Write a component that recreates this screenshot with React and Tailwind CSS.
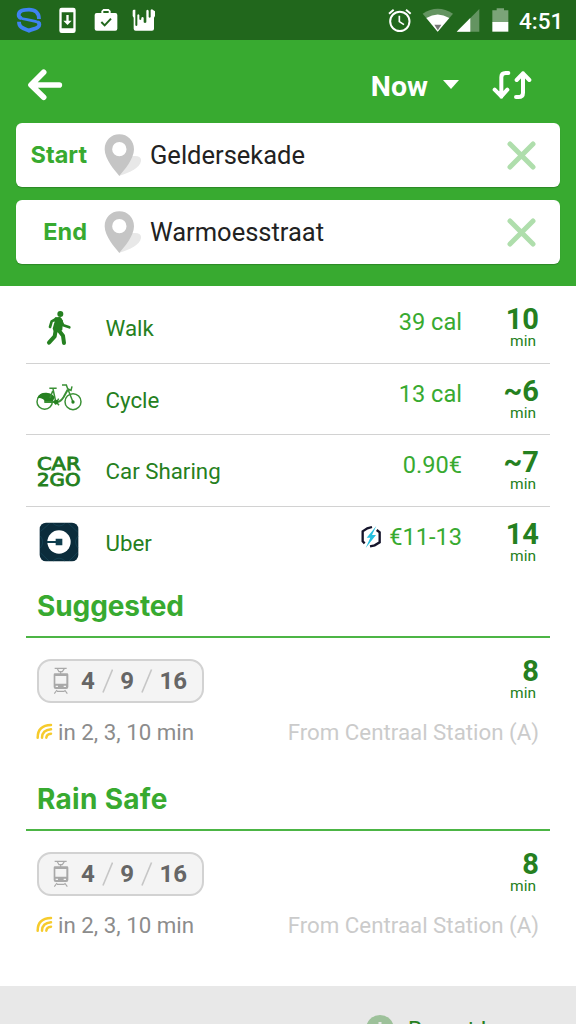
import React from "react";

const statusIcon = "block shrink-0";

function ShieldLogo() {
  return (
    <svg className={statusIcon} width="26" height="28" viewBox="48 18 78 84" fill="none" stroke="#3f83f1" strokeWidth="11.500">
      <path d="M117 57C117 38 105 29 87 29C68 29 56 35 56 45C56 50 59 53 64 55" />
      <path d="M58 52Q66 57 82 59L106 64Q114 66 120 71" strokeWidth="8" />
      <path d="M113 67Q118 69 118 74C118 84 104 85 87 92C70 85 57 83 57 65" />
    </svg>
  );
}

function PhoneDownload() {
  return (
    <svg className={statusIcon} width="17" height="28" viewBox="176 18 51 84">
      <path fill="#fff" fillRule="evenodd" d="M184 23h35q7 0 7 7v62q0 7-7 7h-35q-7 0-7-7V30q0-7 7-7zM184 37v48h35V37z" />
      <path d="M198 45h7v17h9l-12.500 13-12.500-13h9z" fill="#fff" />
    </svg>
  );
}

function CaseCheck() {
  return (
    <svg className={statusIcon} width="24" height="28" viewBox="281 18 72 84">
      <path fill="#fff" fillRule="evenodd" d="M289 39h14v-6l6-6h16l6 6v6h14q6 0 6 6v41q0 6-6 6h-56q-6 0-6-6V45q0-6 6-6zM309 39h16v-6h-16z" />
      <path d="M303 66l10 10 19-20" fill="none" stroke="#21671c" strokeWidth="6" />
    </svg>
  );
}

function Drips() {
  return (
    <svg className={statusIcon} width="24" height="28" viewBox="397 18 72 84">
      <path fill="#fff" d="M399 33q0-4 4-4h4V76q3 4 6 0V45q3-5 6 0v13q3 4 6 0v-5q4-4 7 0v14q4 4 8 0V32q3-5 7 0v19q3 4 6 0V30q4-4 7 0l6 4v14l-3 5v33q0 6-6 6h-49q-6 0-6-6V53l-3-5z" />
    </svg>
  );
}

function StatusBar() {
  return (
    <div className="flex h-10 items-center bg-[#21671c] pl-4 text-white">
      <ShieldLogo />
      <div className="ml-[17px]"><PhoneDownload /></div>
      <div className="ml-[18px]"><CaseCheck /></div>
      <div className="ml-[14px]"><Drips /></div>
      <div className="ml-auto flex items-center pr-[14px]">
        <svg className={statusIcon} width="24" height="28" viewBox="86 18 72 84" fill="none" stroke="#fff">
          <circle cx="121.500" cy="64" r="29" strokeWidth="6" />
          <path d="M120 47v18l14 9" strokeWidth="5" />
          <path d="M89 41l14-12M154 41l-14-12" strokeWidth="6" />
        </svg>
        <svg className="ml-2.5 block shrink-0" width="32" height="28" viewBox="186 18 96 84">
          <path d="M188 41Q233 11 279 41L233 95z" fill="#649461" />
          <path d="M199 54Q233 33 268 54L233 95z" fill="#fff" />
          <path d="M223 74h21l-10.500 17z" fill="#777" />
        </svg>
        <svg className="ml-0.5 block shrink-0" width="24" height="28" viewBox="287 18 72 84">
          <path d="M289 95L357 27v68z" fill="#649461" />
          <path d="M289 95L330 54v41z" fill="#fff" />
        </svg>
        <svg className="ml-3 block shrink-0" width="17" height="28" viewBox="395 18 51 84">
          <path d="M396 31h13v-6h22v6h13v36h-48z" fill="#7ba478" />
          <path d="M396 66h48v29h-48z" fill="#fff" />
        </svg>
        <span className="ml-2.5 w-[43px] pt-0.5 text-[22.500px] font-medium leading-7">4:51</span>
      </div>
    </div>
  );
}

function Pin() {
  return (
    <svg className="block shrink-0" width="38" height="44" viewBox="312 54 114 132">
      <path d="M358 182L392 124Q425 119 423 138C420 158 390 173 358 182z" fill="#e8e8e8" />
      <path fill="#c5c5c5" fillRule="evenodd" d="M358 58C333 58 314 77 314 103C314 133 344 166 358 183C372 166 402 133 402 103C402 77 383 58 358 58zM358 81a21.500 21.500 0 1 1 0 43a21.500 21.500 0 1 1 0-43z" />
    </svg>
  );
}

function Field({ label, value }) {
  return (
    <div className="flex h-16 items-center rounded-md bg-white pr-6 shadow-[0_1px_1px_rgba(0,0,0,0.2)]">
      <div className="w-[71px] text-right font-['Inter'] text-[23.500px] font-bold text-[#38aa30]">{label}</div>
      <div className="ml-[17px]"><Pin /></div>
      <div className="ml-[8px] flex-1 text-[25.500px] text-[#222]">{value}</div>
      <svg width="29" height="29" viewBox="0 0 29 29" stroke="#afdeac" strokeWidth="5" strokeLinecap="round">
        <path d="M3 3l23 23M26 3L3 26" />
      </svg>
    </div>
  );
}

function Header() {
  return (
    <header className="h-[246px] bg-[#38aa30] px-4 text-white">
      <div className="flex h-[83px] items-center pt-[7px]">
        <svg className="ml-[11px]" width="37" height="34" viewBox="81 204 111 102" fill="none" stroke="#fff" strokeWidth="17" strokeLinecap="round" strokeLinejoin="round">
          <path d="M131 217L93 255L131 292M96 255H178" />
        </svg>
        <span className="ml-auto pt-1 text-[28.500px] font-bold leading-8">Now</span>
        <svg className="ml-[15px] mt-[-1px]" width="16" height="9" viewBox="0 0 16 9"><path d="M0 0h16l-8 9z" fill="#fff" /></svg>
        <svg className="ml-[33px] mr-[26px]" width="42" height="30" viewBox="396 210 126 90" fill="none" stroke="#fff" strokeWidth="12" strokeLinecap="round" strokeLinejoin="round">
          <path d="M445 219H437Q424 219 424 232V290M404 269L424 289L442 269M468 291H475Q489 291 489 278V220M470 240L489 220L508 240" />
        </svg>
      </div>
      <div className="flex flex-col gap-[13px]">
        <Field label="Start" value="Geldersekade" />
        <Field label="End" value="Warmoesstraat" />
      </div>
    </header>
  );
}

function WalkIcon() {
  return (
    <svg className="block" width="26" height="36" viewBox="80 42 78 108" fill="none" stroke="#258020" strokeLinecap="round" strokeLinejoin="round">
      <circle cx="123" cy="54" r="9" fill="#258020" stroke="none" />
      <path d="M109 67L122 66L128 75L126 101L108 108L103 98L108 80z" fill="#258020" strokeWidth="6" />
      <path d="M110 69L97 76L92 93M123 70L132 88L150 94" strokeWidth="8" />
      <path d="M109 103L106 121L89 140M118 103L131 119L134 141" strokeWidth="12" />
    </svg>
  );
}

function BikeIcon() {
  return (
    <svg className="mb-[5px] block" width="46" height="28" viewBox="49 260 138 84" fill="none" stroke="#3a9035" strokeWidth="4.500">
      <circle cx="75" cy="316" r="23" />
      <circle cx="160" cy="316" r="24" />
      <path d="M53 304Q60 288 80 289Q100 291 105 303L98 319H74Q78 305 53 304z" fill="#258020" stroke="none" />
      <path d="M75 317H113Q123 316 132 302L144 280" strokeWidth="6" />
      <path d="M100 278L108 315L118 327M99 284L91 305M140 267L160 317M127 266H140L144 277L154 282L157 270M89 276H111M107 325L117 307" />
      <circle cx="109" cy="317" r="7" fill="#258020" stroke="none" />
      <circle cx="160" cy="317" r="5" fill="#258020" stroke="none" />
    </svg>
  );
}

function CarLogo() {
  return (
    <svg className="block overflow-visible" width="44" height="32" viewBox="0 0 44 32" fill="#258020" stroke="#258020" strokeWidth="0.900" fontFamily="DejaVu Sans" fontSize="18">
      <text x="0" y="14.500" textLength="43.500" lengthAdjust="spacingAndGlyphs">CAR</text>
      <text x="0" y="30.500" textLength="43.500" lengthAdjust="spacingAndGlyphs">2GO</text>
    </svg>
  );
}

function UberIcon() {
  return (
    <svg className="block" width="40" height="40" viewBox="58 262 120 120">
      <rect x="60" y="264" width="116" height="116" rx="19" fill="#0b2c3b" />
      <g fill="none" stroke="#17485a" strokeWidth="2">
        <path d="M63 290L90 266M146 266L174 292M63 355L88 379M148 379L174 353M100 266Q118 282 136 266M100 379Q118 362 136 379M62 304Q76 322 62 340M175 304Q160 322 175 340" />
      </g>
      <circle cx="118" cy="322" r="35" fill="#fff" />
      <path d="M82 319h26v-7h20v20h-20v-7H82z" fill="#0f3e4e" />
    </svg>
  );
}

function SurgeIcon() {
  return (
    <svg className="mr-[7px] block" width="22" height="24" viewBox="62 687 66 72" fill="none">
      <path d="M98 693L84 697L70 706V736L76 742M112 702L121 709V739L106 748L92 751" stroke="#14142b" strokeWidth="7" />
      <path d="M111 690L82 725H93L79 756L110 717H98z" fill="#25bfe0" />
    </svg>
  );
}

function Minutes({ value }) {
  return (
    <div className="flex flex-col">
      <span className="h-6 text-right text-[29px] font-bold leading-6 text-[#258020]">{value}</span>
      <span className="pr-[3px] text-right text-[15.500px] leading-[21px] text-[#258020]">min</span>
    </div>
  );
}

function ModeRow({ icon, name, cost, minutes, extra, last }) {
  return (
    <div className={"flex h-[71.500px] items-start pr-[11px] " + (last ? "" : "border-b border-[#d2d2d2]")}>
      <div className="flex h-[71px] w-[66px] items-center justify-center">{icon}</div>
      <div className="ml-[13.500px] text-[22.300px] leading-[72px] text-[#258020]">{name}</div>
      <div className="ml-auto flex items-center pt-4 text-[23.600px] leading-7 text-[#38aa30]">{extra}{cost}</div>
      <div className="w-[77px] pt-[15px]"><Minutes value={minutes} /></div>
    </div>
  );
}

function TramIcon() {
  return (
    <svg className="block" width="16" height="28" viewBox="102 262 48 84" fill="none" stroke="#a9a9a9" strokeWidth="3.500">
      <path d="M107 266H143M115 267L120 276H130L136 267M125 274V283" />
      <path fill="#a9a9a9" stroke="none" fillRule="evenodd" d="M108 281h36q4 0 4 4v37q0 6-6 6h-32q-6 0-6-6v-37q0-4 4-4zM109 289v23h33v-23z" />
      <path d="M110 320H117M134 320H141" stroke="#f4f4f4" />
      <path d="M114 331L106 342M137 331L145 342M114 335H137" />
    </svg>
  );
}

function LiveIcon() {
  return (
    <svg className="mb-[2px] ml-[-1px] block" width="17" height="17" viewBox="49 427 51 51" fill="none" stroke="#f6cb2c" strokeWidth="7.500" strokeLinecap="round">
      <path d="M54 471Q54 434 94 433M67 471Q68 448 94 446M80 471Q81 460 94 459" />
    </svg>
  );
}

function Slash() {
  return (
    <svg className="mx-[7px] block" width="11.500" height="26" viewBox="0 0 12 26"><path d="M1 25L11 1" stroke="#c6c6c6" strokeWidth="1.700" /></svg>
  );
}

function RouteSection({ title, titleClass }) {
  return (
    <section className="h-[193px]">
      <div className="h-[60px] border-b-2 border-[#4cb545] pl-[11px]">
        <h2 className={"pt-[12px] font-['Inter'] text-[28px] font-bold leading-8 text-[#38aa30] " + titleClass}>{title}</h2>
      </div>
      <div className="flex items-start justify-between pl-[11px] pr-[11px] pt-[21px]">
        <div className="flex h-11 w-[167px] items-center rounded-[14px] border-2 border-[#d2d2d2] bg-[#f4f4f4] pl-[14px] text-[24px] font-bold text-[#666]">
          <TramIcon />
          <span className="ml-3">4</span>
          <Slash />
          <span>9</span>
          <Slash />
          <span>16</span>
        </div>
        <Minutes value="8" />
      </div>
      <div className="mt-[14px] flex h-7 items-center pl-[11px] pr-[11px] text-[22.300px] leading-7">
        <LiveIcon />
        <span className="ml-[5px] text-[#8c8c8c]">in 2, 3, 10 min</span>
        <span className="ml-auto text-[#cbcbcb]">From Centraal Station (A)</span>
      </div>
    </section>
  );
}

export default function App() {
  return (
    <div className="flex h-[1024px] w-[576px] flex-col overflow-hidden bg-white font-['Roboto',sans-serif]">
      <StatusBar />
      <Header />
      <main className="h-[700px] shrink-0 pl-[26px] pr-[26px] pt-[6px]">
        <ModeRow icon={<WalkIcon />} name="Walk" cost="39 cal" minutes="10" />
        <ModeRow icon={<BikeIcon />} name="Cycle" cost="13 cal" minutes="~6" />
        <ModeRow icon={<CarLogo />} name="Car Sharing" cost="0.90€" minutes="~7" />
        <ModeRow icon={<UberIcon />} name="Uber" cost="€11-13" minutes="14" extra={<SurgeIcon />} last />
        <RouteSection title="Suggested" titleClass="tracking-[-0.100px]" />
        <RouteSection title="Rain Safe" titleClass="tracking-[0.300px]" />
      </main>
      <footer className="h-[38px] shrink-0 overflow-hidden bg-[#e8e8e8]">
        <div className="flex items-start pl-[366px] pt-[29px]">
          <svg className="block shrink-0" width="28" height="28" viewBox="0 0 28 28">
            <circle cx="14" cy="14" r="14" fill="#9dc19a" />
            <path d="M14 7v9M14 19v3" stroke="#e8e8e8" strokeWidth="3" />
          </svg>
          <span className="ml-[14px] text-[22.500px] leading-7 text-[#258020]">Report Issue</span>
        </div>
      </footer>
    </div>
  );
}
